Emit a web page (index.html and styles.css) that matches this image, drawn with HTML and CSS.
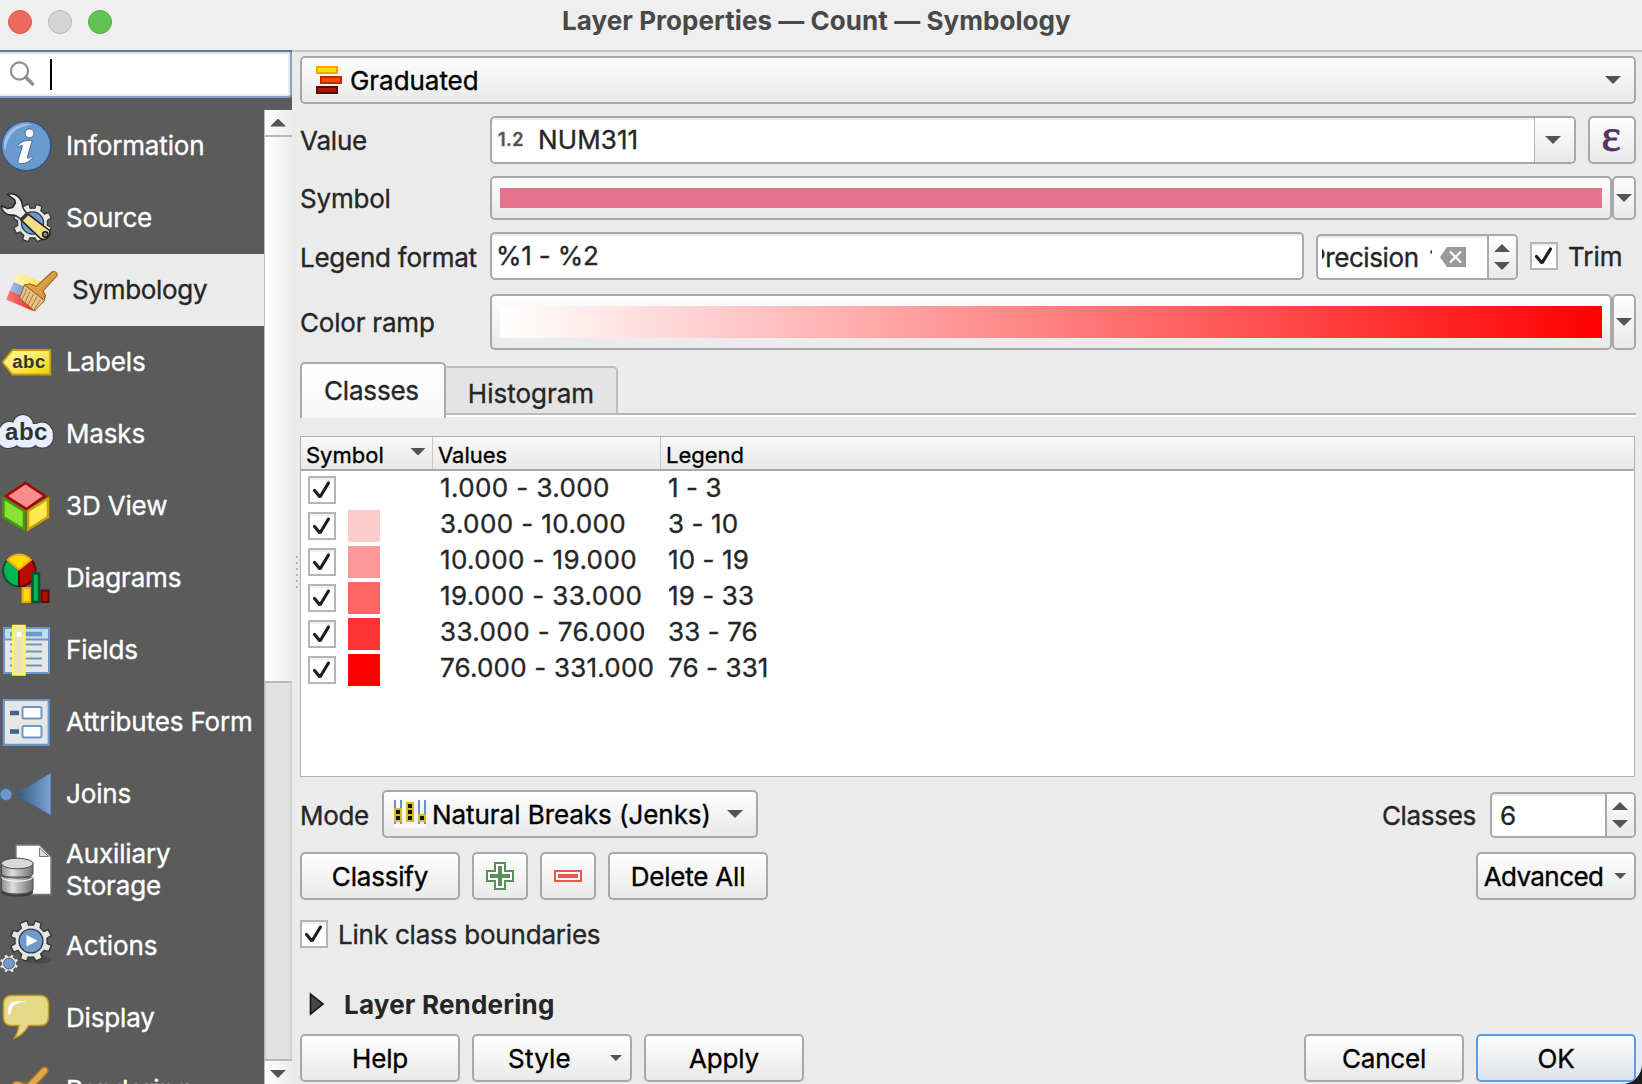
FILE: index.html
```html
<!DOCTYPE html>
<html lang="en">
<head>
<meta charset="utf-8">
<title>Layer Properties — Count — Symbology</title>
<link rel="stylesheet" href="styles.css">
</head>
<body>
<svg width="0" height="0" class="defs">
  <defs>
    <symbol id="tick" viewBox="0 0 28 28"><path d="M6.5 14.5 L12 21 L20.5 7" fill="none" stroke="#1f1f1f" stroke-width="3.2" stroke-linecap="round" stroke-linejoin="bevel"/></symbol>
    <symbol id="gear" viewBox="-22 -22 44 44">
      <g stroke-linejoin="round">
        <path id="cog" d="M-3.8 -20.5 L-2.6 -16.2 A16.4 16.4 0 0 1 2.6 -16.2 L4.2 -20.5 L10.4 -18.2 L9.2 -13.6 A16.4 16.4 0 0 1 13.2 -9.7 L17.6 -11.6 L20.6 -5.6 L16.3 -2.8 A16.4 16.4 0 0 1 16.3 2.6 L20.7 4.6 L18.2 10.7 L13.4 9.6 A16.4 16.4 0 0 1 9.8 13.3 L11.5 17.6 L5.2 20.4 L2.6 16.3 A16.4 16.4 0 0 1 -2.8 16.2 L-4.6 20.5 L-10.9 18.3 L-9.5 13.5 A16.4 16.4 0 0 1 -13.3 9.7 L-17.8 11.4 L-20.5 5.3 L-16.2 2.8 A16.4 16.4 0 0 1 -16.3 -2.6 L-20.6 -4.6 L-18.1 -10.8 L-13.5 -9.5 A16.4 16.4 0 0 1 -9.8 -13.2 L-11.4 -17.8 L-5 -20.5 Z" fill="#e6e7e3" stroke="#34383a" stroke-width="1.4"/>
        <circle r="12.2" fill="#6f9bcb" stroke="#2b3a4c" stroke-width="1.4"/>
      </g>
    </symbol>
    <linearGradient id="blueWedge"><stop offset="0" stop-color="#2f5680"/><stop offset="1" stop-color="#7aa3d3"/></linearGradient>
    <linearGradient id="metal"><stop offset="0" stop-color="#8b8b8b"/><stop offset=".35" stop-color="#dedede"/><stop offset="1" stop-color="#6c6c6c"/></linearGradient>
    <linearGradient id="tag" x2="1" y2="1"><stop offset=".35" stop-color="#fdf07b"/><stop offset="1" stop-color="#eed400"/></linearGradient>
    <linearGradient id="wood" x2="1" y2="1"><stop offset="0" stop-color="#eab964"/><stop offset="1" stop-color="#c9862c"/></linearGradient>
    <linearGradient id="flagY"><stop offset="0" stop-color="#fdf6c4"/><stop offset="1" stop-color="#fce431"/></linearGradient>
    <linearGradient id="flagB"><stop offset="0" stop-color="#a2bde0"/><stop offset="1" stop-color="#5380bd"/></linearGradient>
    <linearGradient id="flagR"><stop offset="0" stop-color="#f5807c"/><stop offset="1" stop-color="#ee1d1d"/></linearGradient>
  </defs>
</svg>

<div class="window">
  <header class="titlebar">
    <div class="lights"><i class="red"></i><i class="grey"></i><i class="green"></i></div>
    <h1>Layer Properties — Count — Symbology</h1>
  </header>

  <div class="body">
    <aside class="sidebar">
      <div class="search">
        <svg width="26" height="26" viewBox="0 0 26 26" fill="none" stroke="#8f8f8f"><circle cx="10.5" cy="10" r="8.6" stroke-width="2.2"/><path d="M17 16.5 L23.5 23" stroke-width="3.6" stroke-linecap="round"/></svg>
        <i class="caret"></i>
      </div>
      <div class="nav">
        <ul class="items">
          <li><svg width="52" height="52" viewBox="0 0 52 52"><circle cx="26.2" cy="26" r="24.6" fill="#6b9acf" stroke="#33558c" stroke-width="1.4"/><path d="M4 27 A22.3 22.3 0 0 1 32 4.500 C16 7 8 13 5.500 31 Z" fill="#a3c0e2"/><g fill="#fff" stroke="#33558c" stroke-width=".8"><circle cx="29.500" cy="13.300" r="4.400"/><path d="M18 25.500 C21 21.500 26 19.800 32.300 20.300 L27.500 36.500 C26.800 39.500 29 38.500 31.500 36.300 L32.300 38 C28.500 42.500 23.500 44.300 19.800 43.600 C17.500 43 18 40.500 18.700 38 L22.200 27 C22.800 24.600 21.500 25 18.800 27.200 Z"/></g></svg><span>Information</span></li>
          <li><svg width="52" height="52" viewBox="0 0 52 52"><use href="#gear" x="12.500" y="11" width="40" height="40"/><path d="M7.500 2.500 C13 .5 19.500 4 21.500 9.500 C22.600 13 22 15.500 24.500 18.500 L27.500 22 L20.500 27 C17.500 24 15 22.500 11 23 C6 23.300 1.500 18.500 1.300 13.800 L7.500 16.500 L12.500 15.500 L15.500 11 L14.500 7.500 Z" fill="#eceeea" stroke="#222" stroke-width="1.400" stroke-linejoin="round"/><path d="M27.800 21.800 L49.500 38.500 C51.500 41.500 48.500 46.500 44 47.600 L40.500 46.500 L20.800 27.800 Z" fill="#f3dd86" stroke="#1b1b1b" stroke-width="1.500"/><path d="M26.500 20 L20 26.500 L22.500 29 L29 22.500 Z" fill="#333"/><circle cx="45.300" cy="42.500" r="2.700" fill="#8d8d8d" stroke="#1b1b1b" stroke-width="1.500"/></svg><span>Source</span></li>
          <li class="current"><svg width="58" height="52" viewBox="0 0 58 52"><path d="M18 8.500 L44.500 19.500 L40 29.500 L13.800 18 Z" fill="url(#flagY)"/><path d="M13.800 18 L40 29.500 L36.500 38 L10 26.500 Z" fill="url(#flagB)"/><path d="M10 26.500 L36.500 38 L33 47 L6 35.500 Z" fill="url(#flagR)"/><path d="M52 8 C54.500 6.500 58 8.500 57 11.800 L43 27 L45.500 31.500 L44 36.500 L24.500 21 L29.500 19.800 L36.500 22.300 Z" fill="url(#wood)" stroke="#99631b" stroke-width="1.100"/><path d="M24.500 21 L44.500 36.500 L34.500 47 L19.500 34 Z" fill="#e8c48c" stroke="#99631b" stroke-width="1"/><path d="M27 25 L22 35.500 M30 27.500 L25 38.500 M33.500 30 L28 41 M37 32.500 L31 43.500 M40.500 35.500 L34 46" stroke="#a87737" stroke-width="1"/></svg><span>Symbology</span></li>
          <li><svg width="52" height="52" viewBox="0 0 52 52"><path d="M12.500 14 H50.300 V38.500 H12.500 L2.500 26.300 Z" fill="url(#tag)" stroke="#c09d09" stroke-width="1.800"/><text x="29" y="32" class="tagtext" font-size="18.500">abc</text></svg><span>Labels</span></li>
          <li><svg width="54" height="52" viewBox="0 0 54 52"><g stroke-linecap="round" stroke-linejoin="round"><path d="M9.500 24 Q5 32 10.500 29.500 M23 17 V29.500 H29 M42 24.500 V29.500 H43 M11 26 H43" fill="none" stroke="#3e4247" stroke-width="22"/><path d="M9.500 24 Q5 32 10.500 29.500 M23 17 V29.500 H29 M42 24.500 V29.500 H43 M11 26 H43" fill="none" stroke="#e9eefc" stroke-width="20"/></g><text x="26.500" y="31.500" class="tagtext" font-size="24">abc</text></svg><span>Masks</span></li>
          <li><svg width="52" height="52" viewBox="0 0 52 52" stroke-width="2.500" stroke-linejoin="miter"><path d="M25.500 3 L45 16 L26.500 29 L6 16 Z" fill="#f68c8c" stroke="#a80000"/><path d="M3.500 18.500 L24 31 V49.500 L3.500 37 Z" fill="#8ae234" stroke="#4a9a06"/><path d="M48 18.500 L28 31 V49.500 L48 37 Z" fill="#fce94f" stroke="#c4a000"/></svg><span>3D View</span></li>
          <li><svg width="52" height="52" viewBox="0 0 52 52" stroke-width="2"><circle cx="19" cy="18.500" r="15.800" fill="#00b84f" stroke="#04562e"/><path d="M19 17 V34.300 A15.800 15.800 0 0 0 31.500 8 Z" fill="#bb0a00" stroke="#5e0a05"/><path d="M19 17.500 L7.500 7.800 A15.800 15.800 0 0 1 31 7.800 Z" fill="#ffdd00" stroke="#f5a31b"/><path d="M22.500 36 H30.500 V50 H22.500 Z" fill="#ffdd00" stroke="#f5a31b"/><path d="M41.500 38.500 H48.500 V50 H41.500 Z" fill="#bb0a00" stroke="#5e0a05"/><path d="M32.500 21.500 H39 V50 H32.500 Z" fill="#00b84f" stroke="#04562e" stroke-width="2.500"/></svg><span>Diagrams</span></li>
          <li><svg width="52" height="54" viewBox="0 0 52 54"><path d="M4 5 H49 V50 H4 Z" fill="#e6e6e6" stroke="#6b97c9" stroke-width="2"/><path d="M5 6 H48 V15.500 H5 Z" fill="#c0dcf0"/><path d="M4 16.500 H49" stroke="#6b97c9" stroke-width="2"/><path d="M10 11 H42" stroke="#6b97c9" stroke-width="4.500"/><path d="M10 21.500 H42 M10 28.500 H42 M10 35.500 H42 M10 42.500 H42" stroke="#6b97c9" stroke-width="2"/><path d="M13.200 3 H24.500 V51.500 H13.200 Z" fill="#ece3b9" stroke="#fdf759" stroke-width="2.600"/><path d="M17 9 H21 V13.500 H17 Z" fill="#fff"/></svg><span>Fields</span></li>
          <li><svg width="52" height="52" viewBox="0 0 52 52"><path d="M3.800 4 H48.700 V48.800 H3.800 Z" fill="#e6e6e6" stroke="#6b97c9" stroke-width="2.200"/><path d="M10 17 H19 M10 35.500 H19" stroke="#46617f" stroke-width="4.500"/><rect x="22.500" y="11" width="19" height="11.500" rx="1.500" fill="#fcfeff" stroke="#6b97c9" stroke-width="2"/><rect x="22.500" y="30" width="19" height="11.500" rx="1.500" fill="#fcfeff" stroke="#6b97c9" stroke-width="2"/></svg><span>Attributes Form</span></li>
          <li><svg width="52" height="52" viewBox="0 0 52 52"><circle cx="6" cy="26.500" r="6" fill="#6b97c9" stroke="#44688f" stroke-width=".8"/><path d="M15 26.500 L51 4.500 V47.500 Z" fill="url(#blueWedge)" stroke="#41658e" stroke-width=".8"/></svg><span>Joins</span></li>
          <li class="tall"><svg width="52" height="54" viewBox="0 0 52 54"><path d="M16 2 H39.500 L51 14 V51.500 H16 Z" fill="#fff" stroke="#777" stroke-width="1.400"/><path d="M39.500 5 V13.500 H48.500 Z" fill="#ddd" stroke="#777"/><path d="M1.500 46 V50 A16 4.500 0 0 0 33 50 V46 Z" fill="#3e3e3e"/><path d="M1.500 34 V47 A16 5 0 0 0 33 47 V34 Z M1.500 20 V31 A16 5 0 0 0 33 31 V20 Z" fill="url(#metal)" stroke="#4c4c4c"/><path d="M1.500 34 A16 5 0 0 0 33 34" fill="none" stroke="#f2f2f2" stroke-width="1.300"/><ellipse cx="17.200" cy="20.500" rx="15.800" ry="5.300" fill="#d9d9d9" stroke="#4c4c4c"/></svg><span>Auxiliary Storage</span></li>
          <li><svg width="54" height="54" viewBox="0 0 54 54"><ellipse cx="38" cy="40.500" rx="14" ry="4" fill="#4b4b4b"/><use href="#gear" x="9.500" y=".5" width="43" height="43"/><path d="M26.500 16 V27.500 L37.500 21.700 Z" fill="#fff"/><use href="#gear" x="-1" y="34.500" width="20" height="20"/></svg><span>Actions</span></li>
          <li><svg width="52" height="52" viewBox="0 0 52 52"><path d="M12 3.500 H40 Q48.500 3.500 48.500 12 V25 Q48.500 33.500 40 33.500 H28.500 C26 38.500 21.500 43.500 14.500 46 C17.500 41 18.500 37.500 19 33.500 H12 Q3.500 33.500 3.500 25 V12 Q3.500 3.500 12 3.500 Z" fill="#e6da88" stroke="#bd9a24" stroke-width="1.500"/><path d="M8.500 23 C7 12 10 7.500 27 9.500 C16 11 12 12 11 21 Z" fill="#fff"/></svg><span>Display</span></li>
          <li><svg width="52" height="52" viewBox="0 0 52 52"><path d="M42.500 3.500 C45.500 2 49.500 5 47.500 8.500 L33 24 L34 32 L12 20 C14 16.500 19 17 22.500 19 L27 20 Z" fill="#e2a64c" stroke="#b0721b" stroke-width="1.300"/><path d="M12 20 L34 32 L26 44 L6 32 Z" fill="#e8c48c" stroke="#99631b"/></svg><span>Rendering</span></li>
        </ul>
        <div class="scroll">
          <div class="sbtn"><i class="up"></i></div>
          <div class="thumb"></div>
          <div class="groove"></div>
          <div class="sbtn down-btn"><i class="down"></i></div>
        </div>
      </div>
    </aside>

    <div class="splitter"><i></i><i></i><i></i><i></i><i></i><i></i></div>

    <main class="content">
      <div class="btn renderer">
        <svg width="26" height="28" viewBox="0 0 26 28" stroke-width="2"><path d="M1 1 H21 V7 H1 Z" fill="#ffdd00" stroke="#ffa200"/><path d="M5 11 H25 V17 H5 Z" fill="#ff4a00" stroke="#c02a00"/><path d="M1 21 H21 V27 H1 Z" fill="#bb0d00" stroke="#5c0a00"/></svg>
        <span>Graduated</span><i class="down"></i>
      </div>

      <div class="row value">
        <label>Value</label>
        <div class="combo"><div class="field"><b>1.2</b><span>NUM311</span></div><div class="drop"><i class="down"></i></div></div>
        <div class="btn eps">ε</div>
      </div>

      <div class="row symbol">
        <label>Symbol</label>
        <div class="btn swatch"><div class="pink"></div></div>
        <div class="btn side"><i class="down"></i></div>
      </div>

      <div class="row legend">
        <label>Legend format</label>
        <div class="field edit">%1 - %2</div>
        <div class="spin precision">
          <div class="clip"><span>Precision 1</span></div>
          <svg width="26" height="20" viewBox="0 0 26 20"><path d="M7 0 H26 V20 H7 L0 10 Z" fill="#9a9a9a"/><path d="M10 4.500 L21 15.500 M21 4.500 L10 15.500" stroke="#fff" stroke-width="2.200"/></svg>
          <div class="steps"><i class="up"></i><i class="down"></i></div>
        </div>
        <div class="check"><svg><use href="#tick"/></svg></div>
        <span class="trim">Trim</span>
      </div>

      <div class="row ramp">
        <label>Color ramp</label>
        <div class="btn swatch"><div class="gradient"></div></div>
        <div class="btn side"><i class="down"></i></div>
      </div>

      <div class="tabs"><div class="tab on">Classes</div><div class="tab">Histogram</div></div>

      <div class="table">
        <div class="thead"><div>Symbol<i class="down"></i></div><div>Values</div><div>Legend</div></div>
        <div class="trow"><div class="check"><svg><use href="#tick"/></svg></div><i class="cell c0"></i><span class="v">1.000 - 3.000</span><span>1 - 3</span></div>
        <div class="trow"><div class="check"><svg><use href="#tick"/></svg></div><i class="cell c1"></i><span class="v">3.000 - 10.000</span><span>3 - 10</span></div>
        <div class="trow"><div class="check"><svg><use href="#tick"/></svg></div><i class="cell c2"></i><span class="v">10.000 - 19.000</span><span>10 - 19</span></div>
        <div class="trow"><div class="check"><svg><use href="#tick"/></svg></div><i class="cell c3"></i><span class="v">19.000 - 33.000</span><span>19 - 33</span></div>
        <div class="trow"><div class="check"><svg><use href="#tick"/></svg></div><i class="cell c4"></i><span class="v">33.000 - 76.000</span><span>33 - 76</span></div>
        <div class="trow"><div class="check"><svg><use href="#tick"/></svg></div><i class="cell c5"></i><span class="v long">76.000 - 331.000</span><span>76 - 331</span></div>
      </div>

      <div class="row mode">
        <label>Mode</label>
        <div class="btn method">
          <svg width="32" height="28" viewBox="0 0 32 28"><path d="M0 24 H32 V26 L30 28 H2 L0 26 Z" fill="#f8f8f8"/><path d="M1 0 V24 M7 0 V24 M25 0 V24 M31 0 V24" stroke="#6b93c4" stroke-width="2"/><path d="M0 8 H8 V22 H0 Z M12 2 H20 V22 H12 Z M24 14 H32 V22 H24 Z" fill="#d3bd22"/><path d="M2 10 H6 V14 H2 Z M2 16 H6 V20 H2 Z M14 4 H18 V8 H14 Z M14 10 H18 V14 H14 Z M14 16 H18 V20 H14 Z M26 16 H30 V20 H26 Z" fill="#111"/></svg>
          <span>Natural Breaks (Jenks)</span><i class="down"></i>
        </div>
        <label class="count">Classes</label>
        <div class="spin classes"><span>6</span><div class="steps"><i class="up"></i><i class="down"></i></div></div>
      </div>

      <div class="row actions">
        <div class="btn wide">Classify</div>
        <div class="btn icon"><svg width="28" height="28" viewBox="0 0 28 28"><path d="M9 1 H19 V9 H27 V19 H19 V27 H9 V19 H1 V9 H9 Z" fill="#fff" stroke="#5a8f5a" stroke-width="2"/><path d="M14 4 V24 M4 14 H24" stroke="#5a8f5a" stroke-width="4"/></svg></div>
        <div class="btn icon"><svg width="28" height="12" viewBox="0 0 28 12"><path d="M1 1 H27 V11 H1 Z" fill="#fff" stroke="#ef5350" stroke-width="2"/><path d="M4 6 H24" stroke="#ef5350" stroke-width="4"/></svg></div>
        <div class="btn wide">Delete All</div>
        <div class="btn wide adv">Advanced<i class="down small"></i></div>
      </div>

      <div class="row link"><div class="check"><svg><use href="#tick"/></svg></div><span>Link class boundaries</span></div>

      <div class="row group"><svg width="16" height="24" viewBox="0 0 16 24"><path d="M1.500 2 L14 12 L1.500 22 Z" fill="#484848" stroke="#111" stroke-width="1.600"/></svg><span>Layer Rendering</span></div>

      <div class="row footer">
        <div class="btn wide">Help</div>
        <div class="btn wide style">Style<i class="down small"></i></div>
        <div class="btn wide">Apply</div>
        <div class="btn wide cancel">Cancel</div>
        <div class="btn wide ok">OK</div>
      </div>
    </main>
  </div>
</div>
</body>
</html>
```
FILE: styles.css
```css
* { box-sizing: border-box; }
body {
  margin: 0;
  width: 1642px;
  height: 1084px;
  overflow: hidden;
  background: #1c1c1c;
  font: 400 26px Inter, "Liberation Sans", sans-serif;
  letter-spacing: -0.2px;
  -webkit-text-stroke: 0.35px;
  color: #262626;
  white-space: nowrap;
}
.defs { display: block; height: 0; }
svg { display: block; flex: none; }

.window {
  display: flex;
  flex-direction: column;
  width: 1642px;
  height: 1084px;
  background: #ebebeb;
  overflow: hidden;
  border-bottom-right-radius: 20px;
}

/* title bar */
.titlebar {
  display: flex;
  align-items: center;
  flex: none;
  height: 52px;
  padding: 0 0 8px 8px;
  background: #efefef;
  border-bottom: 2px solid #c4c4c4;
}
.lights { display: flex; gap: 16px; width: 554px; padding-top: 2px; }
.lights i { width: 24px; height: 24px; border-radius: 50%; border: 1px solid; }
.lights .red { background: #ed6a5e; border-color: #d8544a; }
.lights .grey { background: #d5d5d5; border-color: #b8b8b8; }
.lights .green { background: #61c454; border-color: #4fa940; }
h1 { margin: -2px 0 0; font-size: 26px; font-weight: 700; letter-spacing: 0.06px; color: #494949; -webkit-text-stroke: 0; }

.body { display: flex; flex: 1; min-height: 0; }

/* sidebar */
.sidebar { display: flex; flex-direction: column; width: 292px; margin-top: -2px; background: #5b5b5b; }
.search {
  display: flex;
  align-items: center;
  flex: none;
  gap: 15px;
  height: 48px;
  padding-left: 9px;
  background: #fff;
  border: solid #84a2c6;
  border-width: 2px 2px 2px 0;
  border-top-color: #5a7da8;
  border-radius: 0 4px 4px 0;
  box-shadow: inset -2px -2px #e8eef5, inset 0 2px #e0e0e0;
}
.caret { width: 2px; height: 31px; background: #000; }
.nav { display: flex; flex: 1; min-height: 0; padding-top: 12px; }
.items { flex: 1; margin: 0; padding: 0; list-style: none; overflow: hidden; height: 974px; }
.items li { display: grid; grid-template-columns: 66px 1fr; align-items: center; height: 72px; color: #fff; }
.items svg { overflow: visible; }
.items span { padding-bottom: 2px; letter-spacing: -0.15px; }
.items .tall { height: 80px; white-space: normal; line-height: 32px; }
.items .tall span { padding-bottom: 0; }
.items .current { background: #ebebeb; color: #262626; grid-template-columns: 72px 1fr; }
.items .current span { letter-spacing: -0.3px; }
.tagtext { font-family: "Liberation Sans", sans-serif; font-weight: 700; fill: #2e3436; text-anchor: middle; letter-spacing: 0.5px; -webkit-text-stroke: 0; }

.scroll { display: flex; flex-direction: column; width: 28px; border-left: 1px solid #b8b8b8; }
.sbtn { display: flex; align-items: center; justify-content: center; height: 27px; padding-right: 1px; background: linear-gradient(90deg, #fdfdfd, #ededed); border-bottom: 2px solid #b8b8b8; }
.thumb { height: 546px; background: linear-gradient(90deg, #fff 10%, #ececec); border-bottom: 2px solid #b8b8b8; }
.groove { flex: 1; background: #e2e2e2; border: solid #d2d2d2; border-width: 0 2px 0 1px; }
.down-btn { border-top: 2px solid #b8b8b8; border-bottom: 0; height: 25px; padding-top: 3px; }

.splitter { display: flex; flex-direction: column; gap: 4px; width: 8px; padding: 504px 0 0 4px; }
.splitter i { width: 2px; height: 2px; background: #b4b4b4; }

/* arrows */
.up, .down { flex: none; width: 16px; height: 8px; background: #545454; clip-path: polygon(0 0, 100% 0, 50% 100%); }
.up { clip-path: polygon(50% 0, 100% 100%, 0 100%); }
.down.small { width: 12px; height: 6px; }

/* main form */
.content { display: flex; flex-direction: column; width: 1336px; padding-top: 4px; }
.btn {
  display: flex;
  align-items: center;
  justify-content: center;
  border: 2px solid #a9a9a9;
  border-radius: 5px;
  background: linear-gradient(#fefefe, #e9e9e9);
  color: #000;
}
.renderer { height: 48px; justify-content: flex-start; padding: 0 13px 0 14px; gap: 8px; letter-spacing: -0.05px; }
.renderer .down { margin-left: auto; }
.row { display: flex; align-items: center; flex: none; }
.row > label { width: 190px; }

.value { height: 48px; margin-top: 12px; }
.combo { display: flex; width: 1086px; height: 48px; border: 2px solid #a9a9a9; border-radius: 5px; background: #fff; overflow: hidden; box-shadow: inset 0 2px #ececec; }
.combo .field { display: flex; align-items: center; width: 1042px; padding-left: 6px; }
.combo b { width: 40px; padding-bottom: 2px; font-size: 18px; font-weight: 600; letter-spacing: 0.5px; color: #555; }
.combo span { letter-spacing: 0.1px; padding-bottom: 1px; }
.drop { display: flex; flex: 1; align-items: center; justify-content: center; padding-right: 3px; border-left: 1px solid #b4b4b4; background: linear-gradient(#fefefe, #e9e9e9); }
.eps { width: 48px; height: 48px; margin-left: 12px; font: 400 46px/46px "Liberation Serif", serif; color: #5b2f66; -webkit-text-stroke: 0.8px; padding: 0 2px 9px 0; }

.symbol { height: 44px; margin-top: 12px; }
.swatch { width: 1122px; height: 100%; padding: 0 8px; }
.side { width: 24px; height: 100%; }
.pink { flex: 1; height: 20px; background: #e8718d; }
.gradient { flex: 1; height: 32px; background: linear-gradient(90deg, #fff, #f00); }

.legend { height: 48px; margin-top: 12px; }
.legend > label { padding-top: 2px; letter-spacing: -0.25px; }
.edit { width: 814px; height: 48px; padding: 0 0 0 4px; line-height: 44px; background: #fff; border: 2px solid #a9a9a9; border-radius: 5px; box-shadow: inset 0 2px #ececec; }
.spin { display: flex; align-items: center; height: 46px; border: 2px solid #a9a9a9; border-radius: 5px; background: #fff; box-shadow: inset 0 2px #ececec; overflow: hidden; }
.steps { display: flex; flex-direction: column; align-items: center; justify-content: center; gap: 10px; width: 29px; height: 100%; margin-left: auto; padding-right: 1px; border-left: 2px solid #a9a9a9; background: linear-gradient(#fefefe, #e9e9e9); }
.precision { width: 202px; margin: 2px 0 0 12px; padding-left: 4px; }
.clip { display: flex; width: 110px; margin-right: 8px; overflow: hidden; letter-spacing: -0.4px; word-spacing: 4px; }
.clip span { margin-left: -13px; }
.check { width: 28px; height: 28px; flex: none; border: 2px solid #b5b5b5; background: #fff; box-shadow: inset 0 2px #efefef; }
.check svg { width: 28px; height: 28px; margin: -2px; }
.precision + .check { margin-left: 12px; }
.trim { margin-left: 10px; letter-spacing: 0; }

.ramp { height: 56px; margin-top: 14px; }

/* tabs */
.tabs { display: flex; align-items: flex-end; height: 56px; margin-top: 12px; flex: none; background: linear-gradient(#b5b5b5, #b5b5b5) 0 51px / 100% 2px no-repeat, linear-gradient(#fff, #fff) 0 53px / 100% 2px no-repeat; }
.tab { height: 49px; width: 172px; margin-bottom: 3px; border: 2px solid #bcbcbc; border-left: 0; border-radius: 0 5px 0 0; background: #e4e4e4; text-align: center; line-height: 51px; letter-spacing: 0; }
.tab.on { width: 146px; height: 56px; margin: 0; border: 2px solid #ababab; border-bottom: 0; border-radius: 5px 5px 0 0; background: linear-gradient(#fff, #f7f7f7); line-height: 53px; padding-right: 3px; letter-spacing: -0.2px; }

/* class table */
.table { width: 1335px; height: 341px; margin-top: 18px; flex: none; border: 1px solid #b0b0b0; background: #fff; }
.thead { display: grid; grid-template-columns: 132px 228px 1fr; height: 34px; border-bottom: 2px solid #ababab; background: linear-gradient(#f8f8f8, #e9e9e9); font-size: 22px; letter-spacing: 0; color: #000; }
.thead div { display: flex; align-items: center; padding: 3px 6px 0 5px; border-right: 1px solid #c6c6c6; }
.thead div + div { padding-left: 5px; }
.thead div:last-child { border: 0; }
.thead .down { margin: -6px 0 0 auto; }
.trow { display: grid; grid-template-columns: 40px 92px 228px 1fr; align-items: center; height: 36px; padding-left: 7px; }
.trow .check { margin-top: 1px; }
.trow span { margin-top: -3px; letter-spacing: 0.1px; }
.trow .v { letter-spacing: 0.4px; }
.trow .long { letter-spacing: 0.2px; }
.cell { width: 32px; height: 32px; margin-top: 1px; }
.c0 { background: #fff; }
.c1 { background: #ffcccc; }
.c2 { background: #ff9999; }
.c3 { background: #ff6666; }
.c4 { background: #ff3333; }
.c5 { background: #ff0000; }

.mode { height: 48px; margin-top: 13px; }
.mode > label { width: 82px; padding-top: 2px; letter-spacing: -0.3px; }
.method { width: 376px; height: 48px; justify-content: flex-start; padding: 0 13px 0 10px; gap: 6px; letter-spacing: -0.05px; }
.method .down { margin-left: auto; }
.mode > .count { width: auto; margin-left: auto; }
.classes { width: 146px; margin: 2px 0 0 14px; padding-left: 8px; }

.actions { height: 48px; margin-top: 14px; gap: 12px; }
.wide { width: 160px; height: 48px; }
.icon { width: 56px; height: 48px; }
.adv { margin-left: auto; padding-right: 2px; gap: 11px; letter-spacing: -0.6px; }

.link { height: 28px; margin-top: 20px; gap: 10px; }

.group { height: 40px; margin-top: 36px; padding-left: 9px; gap: 19px; font-weight: 700; letter-spacing: 0.2px; -webkit-text-stroke: 0; }

.footer { height: 48px; margin-top: 10px; gap: 12px; }
.style { letter-spacing: 0.2px; padding-left: 26px; gap: 39px; }
.cancel { margin-left: auto; }
.ok { border-color: #5b9ee8; background: linear-gradient(#fefefe, #dde1e8); }
```
